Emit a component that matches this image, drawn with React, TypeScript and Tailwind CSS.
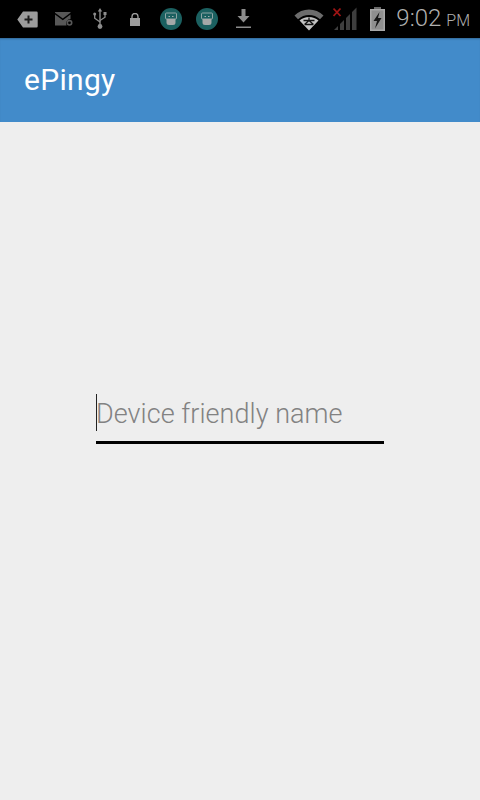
import React from 'react';

const C = { dim: '#585858', mid: '#8c8c8c', bright: '#9c9c9c' };

const StatusIcons = () => (
  <div className="flex items-center">
    {/* plus tag */}
    <svg width="21" height="17" viewBox="0 0 21 17" className="ml-[17px]">
      <path d="M6 0.500h13.500a1.200 1.200 0 0 1 1.200 1.200v13.600a1.200 1.200 0 0 1-1.200 1.200H6L0.300 8.500z" fill={C.bright} />
      <path d="M11.500 4.500v8M7.500 8.500h8" stroke="#1c1c1c" strokeWidth="2" />
    </svg>
    {/* mail with gear */}
    <svg width="18" height="14" viewBox="0 0 18 14" className="ml-[17px]">
      <path d="M0 0h15.500v0.800L7.800 6.600 0 0.800z" fill={C.dim} />
      <path d="M0 2.500l7.800 5.800 7.700-5.800V7a4.500 4.500 0 0 0-4 6.500H0z" fill={C.dim} />
      <circle cx="14.500" cy="10.800" r="2.200" fill="none" stroke={C.dim} strokeWidth="1.600" />
    </svg>
    {/* usb */}
    <svg width="14" height="22" viewBox="0 0 14 22" className="ml-[20px]">
      <path d="M7 0L4.800 3.500h1.500V17h1.400V3.500h1.500z" fill={C.mid} />
      <circle cx="7" cy="18.500" r="2.400" fill={C.mid} />
      <path d="M1.700 7v3.200L7 14M12 6.500v2.700L7 12.500" fill="none" stroke={C.mid} strokeWidth="1.300" />
      <circle cx="1.700" cy="6" r="1.500" fill={C.mid} />
      <rect x="10.500" y="4" width="3" height="3" fill={C.mid} />
    </svg>
    {/* lock */}
    <svg width="10" height="13" viewBox="0 0 10 13" className="ml-[23px]">
      <rect x="0" y="5" width="10" height="8" fill={C.bright} />
      <path d="M2 5.500V3.500a3 3 0 0 1 6 0v2" fill="none" stroke={C.bright} strokeWidth="1.400" />
    </svg>
    {[0, 1].map((i) => (
      <svg key={i} width="22" height="22" viewBox="0 0 22 22" className={i === 0 ? 'ml-[20px]' : 'ml-[14px]'}>
        <circle cx="11" cy="11" r="11" fill="#1b6060" />
        <rect x="5.500" y="5" width="11" height="6" rx="1" fill="none" stroke="#8fa5a5" strokeWidth="1" />
        <path d="M6.500 11h9v3.500a2.500 2.500 0 0 1-2.500 2.500H9a2.500 2.500 0 0 1-2.500-2.500z" fill="#a4a8a8" />
        <path d="M8.500 8.500h1.500M12 8.500h1.500" stroke="#a4b0b0" strokeWidth="1.200" />
      </svg>
    ))}
    {/* download */}
    <svg width="15" height="20" viewBox="0 0 15 20" className="ml-[18px]">
      <path d="M5.500 0h4v7h4l-6 6.500-6-6.500h4z" fill={C.mid} />
      <rect x="0" y="17.500" width="15" height="1.500" fill={C.mid} />
    </svg>
  </div>
);

const SystemIcons = () => (
  <div className="flex items-center">
    {/* wifi */}
    <svg width="30" height="22" viewBox="0 0 30 22" className="mt-[1px]">
      <path d="M0.500 6.500C8 -1.500 22 -1.500 29.500 6.500l-3.500 3.800C20 4.500 10 4.500 4 10.300z" fill="#6c6c6c" />
      <path d="M5.500 11.500C10.500 6.800 19.500 6.800 24.500 11.500L15 21.500z" fill="#c4c4c4" />
      <path d="M9.500 11.500h11M15 8.500v3M15 11.500l-4.500 4M15 11.500l4.500 4M11 15.500h8" stroke="#111" strokeWidth="1.300" />
    </svg>
    {/* signal with red cross */}
    <svg width="24" height="24" viewBox="0 0 24 24" className="ml-[9px]">
      <path d="M0.500 9L7.500 1.500M0.500 1.500L7.500 9" stroke="#a01414" strokeWidth="1.800" />
      <path d="M1 23l4-4v4zM7 23v-6l4-4v10zM13 23V11l4-4v16zM19 23V5l4.500-4.500V23z" fill="#3e3e3e" />
    </svg>
    {/* battery */}
    <svg width="15" height="24" viewBox="0 0 15 24" className="ml-[13px]">
      <rect x="4" y="0" width="7" height="3" fill="#6a6a6a" />
      <rect x="0.750" y="2.750" width="13.500" height="20.500" fill="#8f8f8f" stroke="#a8a8a8" strokeWidth="1.500" />
      <path d="M9.500 5L3.500 14H7L5 21.500 11.500 11H8z" fill="#161616" />
    </svg>
  </div>
);

export default function App() {
  return (
    <div className="flex flex-col w-[480px] h-[800px] overflow-hidden bg-[#eeeeee]">
      {/* status bar */}
      <div className="flex items-center justify-between h-[38px] shrink-0 bg-black">
        <StatusIcons />
        <div className="flex items-center">
          <SystemIcons />
          <div className="ml-[11px] mr-[10px] flex items-baseline text-[#b0b0b0] font-['Roboto',sans-serif] font-light">
            <span className="text-[24px] leading-[38px]">9:02</span>
            <span className="ml-[5px] text-[16px] leading-[38px]">PM</span>
          </div>
        </div>
      </div>

      {/* action bar */}
      <div className="flex items-center h-[84px] shrink-0 px-[24px] bg-[#428bca] shadow-[inset_0_2px_2px_-1px_rgba(0,0,0,0.25)]">
        <h1 className="text-[30px] tracking-[0.3px] leading-none text-white font-['Roboto',sans-serif]">ePingy</h1>
      </div>

      {/* form */}
      <div className="flex flex-1 justify-center pt-[271px]">
        <div className="flex items-center w-[288px] h-[51px] border-b-[3px] border-black">
          <span className="w-px h-[37px] -mt-[9px] bg-[#222]" />
          <span className="-ml-px -mt-[6px] text-[27px] tracking-[0.05px] leading-none text-[#828282] font-['Roboto',sans-serif] font-light">
            Device friendly name
          </span>
        </div>
      </div>
    </div>
  );
}
